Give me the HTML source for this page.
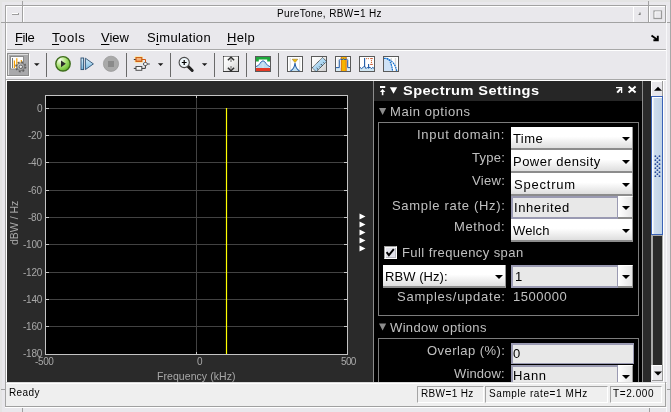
<!DOCTYPE html>
<html><head><meta charset="utf-8">
<style>
*{margin:0;padding:0;box-sizing:border-box}
html,body{width:671px;height:412px;overflow:hidden;background:#e9e8ec;font-family:"Liberation Sans",sans-serif;position:relative}
.a{position:absolute}
.t{position:absolute;white-space:nowrap;line-height:1;will-change:transform}
.u{text-decoration:underline;text-underline-offset:2px;text-decoration-thickness:1px}
</style></head><body>
<div class="a" style="left:0px;top:0px;width:671px;height:2px;background:#e4e4e4"></div>
<div class="a" style="left:5px;top:5px;width:661px;height:1px;background:#a2a2a2"></div>
<div class="a" style="left:6px;top:6px;width:659px;height:1px;background:#fff"></div>
<div class="a" style="left:665px;top:5px;width:1px;height:18px;background:#a2a2a2"></div>
<div class="a" style="left:0px;top:2px;width:2px;height:410px;background:#e4e4e4"></div>
<div class="a" style="left:5px;top:5px;width:1px;height:401px;background:#a4a4a4"></div>
<div class="a" style="left:6px;top:6px;width:1px;height:376px;background:#fff"></div>
<div class="a" style="left:23px;top:6px;width:1px;height:16px;background:#fff"></div>
<div class="a" style="left:22px;top:1px;width:1px;height:22px;background:#a2a2a2"></div>
<div class="a" style="left:648px;top:1px;width:1px;height:22px;background:#a2a2a2"></div>
<div class="a" style="left:633px;top:6px;width:1px;height:16px;background:#fff"></div>
<div class="a" style="left:649px;top:6px;width:1px;height:16px;background:#fff"></div>
<div class="a" style="left:1px;top:22px;width:665px;height:1px;background:#a2a2a2"></div>
<div class="a" style="left:12px;top:13px;width:7px;height:2px;border-bottom:1px solid #9c9c9c;border-right:1px solid #9c9c9c;background:#fff"></div>
<svg class="a" style="left:0;top:0" width="671" height="50"><path d="M640 12.5 V14.5 H638.6" fill="none" stroke="#777" stroke-width="1.2"/><rect x="654" y="11" width="7.5" height="7.5" fill="none" stroke="#9a9a9a" stroke-width="1.2"/><path d="M655 17.5 V11.8 H660.8" fill="none" stroke="#fff" stroke-width="0.8"/><path d="M651.5 35.6 L657 39.6 M657.8 35.8 V40.2 H653.4" fill="none" stroke="#000" stroke-width="1.9"/></svg>
<div class="t" style="left:276.80px;top:9px;font-size:10px;letter-spacing:0.382px;color:#000;">PureTone, RBW=1 Hz</div>
<div class="t" style="left:15.20px;top:31px;font-size:13px;letter-spacing:-0.400px;color:#000;"><span class="u">F</span>ile</div>
<div class="t" style="left:52.00px;top:31px;font-size:13px;letter-spacing:0.587px;color:#000;"><span class="u">T</span>ools</div>
<div class="t" style="left:101.00px;top:31px;font-size:13px;letter-spacing:0.000px;color:#000;"><span class="u">V</span>iew</div>
<div class="t" style="left:146.70px;top:31px;font-size:13px;letter-spacing:0.328px;color:#000;">S<span class="u">i</span>mulation</div>
<div class="t" style="left:227.00px;top:31px;font-size:13px;letter-spacing:0.350px;color:#000;"><span class="u">H</span>elp</div>
<svg class="a" style="left:0;top:0" width="671" height="82" viewBox="0 0 671 82" shape-rendering="geometricPrecision">
<defs>
<radialGradient id="gPlay" cx="0.3" cy="0.25" r="0.85"><stop offset="0" stop-color="#fafff4"/><stop offset="0.45" stop-color="#b0e47c"/><stop offset="1" stop-color="#5cb422"/></radialGradient>
<linearGradient id="gBlue" x1="0" y1="0" x2="0" y2="1"><stop offset="0" stop-color="#d8eefa"/><stop offset="1" stop-color="#78b8e0"/></linearGradient>
<linearGradient id="gBox" x1="0" y1="0" x2="1" y2="0"><stop offset="0" stop-color="#ffffff"/><stop offset="1" stop-color="#d4d4d4"/></linearGradient>
<linearGradient id="gOr" x1="0" y1="0" x2="0" y2="1"><stop offset="0" stop-color="#fad0a0"/><stop offset="1" stop-color="#ec9450"/></linearGradient>
<linearGradient id="gBox2" x1="0" y1="0" x2="1" y2="1"><stop offset="0" stop-color="#ffffff"/><stop offset="0.4" stop-color="#f4f4f4"/><stop offset="1" stop-color="#cccccc"/></linearGradient>
<linearGradient id="gRul" x1="0" y1="0" x2="1" y2="1"><stop offset="0" stop-color="#d4ecfa"/><stop offset="1" stop-color="#86c0e6"/></linearGradient>
<linearGradient id="gGear" x1="0" y1="0" x2="1" y2="1"><stop offset="0" stop-color="#d8d8d8"/><stop offset="1" stop-color="#888888"/></linearGradient>
</defs>
<!-- menu separator -->
<rect x="7" y="49" width="659" height="1" fill="#a8a8a8"/>
<rect x="7" y="50" width="659" height="1" fill="#ffffff"/>
<!-- toolbar bottom -->
<rect x="6" y="79" width="660" height="1" fill="#a8a8a8"/>
<rect x="6" y="80" width="660" height="1" fill="#ffffff"/>
<!-- pressed button -->
<rect x="7.5" y="53.5" width="21" height="22" fill="#a9a9ab" stroke="#8c8c8c"/>
<path d="M8.5 75 V54.5 H28" fill="none" stroke="#dedede"/>
<path d="M29.5 54 V76.5 H7" fill="none" stroke="#ffffff"/>
<!-- icon: scope w/ gear -->
<rect x="10.5" y="56.5" width="13" height="12.5" fill="#fdfdfd" stroke="#8a8a8a"/>
<path d="M12.5 58 V68" stroke="#6a6a6a" stroke-width="0.9"/>
<path d="M14.4 68 V60.5 M16.8 68 V58.2 M19 68 V62.5 M21.3 68 V60" stroke="#f5a000" stroke-width="1.2"/>
<g transform="translate(20.8,66.8)">
<circle r="4.5" fill="none" stroke="#5e5e5e" stroke-width="2.2" stroke-dasharray="1.7 1.83"/>
<circle r="3.9" fill="url(#gGear)" stroke="#6a6a6a" stroke-width="0.7"/>
<circle r="1.7" fill="#ececec" stroke="#4a4a4a" stroke-width="0.8"/>
</g>
<!-- dropdown arrows -->
<path d="M34 63.2 H39.6 L36.8 66Z" fill="#1a1a1a"/>
<path d="M157.9 63.2 H163.3 L160.6 66Z" fill="#1a1a1a"/>
<path d="M201.9 63.2 H207.3 L204.6 66Z" fill="#1a1a1a"/>
<!-- separators -->
<rect x="46" y="53" width="1" height="24" fill="#6a6a6a"/>
<rect x="126" y="53" width="1" height="24" fill="#6a6a6a"/>
<rect x="170" y="53" width="1" height="24" fill="#6a6a6a"/>
<rect x="214" y="53" width="1" height="24" fill="#6a6a6a"/>
<rect x="246" y="53" width="1" height="24" fill="#6a6a6a"/>
<rect x="278" y="53" width="1" height="24" fill="#6a6a6a"/>
<!-- play -->
<circle cx="63" cy="63.8" r="7.2" fill="url(#gPlay)" stroke="#3e6c1c" stroke-width="1.4"/>
<path d="M61 60.5 L65.8 63.8 L61 67.2Z" fill="#2a2a2a"/>
<!-- step -->
<rect x="81" y="58" width="2.6" height="11.6" fill="url(#gBlue)" stroke="#2a4e70" stroke-width="0.9"/>
<path d="M85.4 58.2 L93.4 63.9 L85.4 69.6Z" fill="url(#gBlue)" stroke="#2a4e70" stroke-width="0.9" stroke-linejoin="round"/>
<!-- stop -->
<circle cx="111" cy="63.8" r="7.6" fill="#a9a9a9" stroke="#9a9a9a" stroke-width="0.8"/>
<rect x="108" y="61" width="6" height="6" fill="#8a8a8a"/>
<!-- hierarchy -->
<rect x="134.6" y="56.2" width="8.4" height="6.6" rx="1" fill="#fde6a0"/>
<path d="M133.8 59.5 H136" stroke="#3a3a3a" stroke-width="1"/>
<rect x="136" y="57.6" width="5.8" height="3.8" fill="url(#gOr)" stroke="#cc5a14" stroke-width="1.1"/>
<path d="M141.8 59.5 H145.5 V62.6" fill="none" stroke="#cc5a14" stroke-width="1"/>
<ellipse cx="145.4" cy="64" rx="2.1" ry="1.5" fill="#fbfbfb" stroke="#4e4e4e" stroke-width="0.9"/>
<path d="M147.6 64 H149.8" stroke="#3a3a3a" stroke-width="0.9"/>
<rect x="136" y="66.5" width="5.8" height="3.8" fill="#f6f6f6" stroke="#4e4e4e" stroke-width="1"/>
<path d="M133.8 68.4 H136 M141.8 68.4 H145.4 V65.5" fill="none" stroke="#3a3a3a" stroke-width="1"/>
<!-- zoom -->
<path d="M187.8 66.1 L192.2 70.5" stroke="#222" stroke-width="3" stroke-linecap="round"/>
<circle cx="184.2" cy="62.5" r="5.1" fill="#eef6fa" stroke="#4a4a4a" stroke-width="1.1"/>
<path d="M181.8 62.5 H186.6 M184.2 60.1 V64.9" stroke="#000" stroke-width="1.2"/>
<!-- autoscale -->
<rect x="223.5" y="56.5" width="15" height="15" fill="url(#gBox2)" stroke="#3a3a3a"/>
<path d="M224 71 V57 H238" fill="none" stroke="#fff" stroke-width="0.8"/>
<rect x="230.3" y="59.2" width="1.4" height="2.8" fill="#8c8c8c"/>
<rect x="230.3" y="66" width="1.4" height="2.8" fill="#8c8c8c"/>
<path d="M227.9 60.2 L231 57.3 L234.1 60.2" fill="none" stroke="#2c2c2c" stroke-width="1.5"/>
<path d="M227.9 67.8 L231 70.7 L234.1 67.8" fill="none" stroke="#2c2c2c" stroke-width="1.5"/>
<!-- spectrum icon -->
<rect x="255.5" y="56.5" width="15" height="15" fill="#fff" stroke="#5a5a5a"/>
<path d="M256 57 H270 V61.6 H267.2 V59.6 H258.8 V61.6 H256Z" fill="#1ea83c"/>
<path d="M256.5 67 C259.5 66.5 260.5 61 263 61 C265.5 61 266.5 66.5 269.5 67 V68 H256.5Z" fill="#bcdcf0"/>
<rect x="262.7" y="61.5" width="0.6" height="6.5" fill="#e8f4fa"/>
<path d="M256 66.6 C259.5 66.3 260.5 60.8 263 60.8 C265.5 60.8 266.5 66.3 270 66.6" fill="none" stroke="#2a62b0" stroke-width="1"/>
<rect x="256" y="68" width="14" height="3" fill="#e53a26"/>
<!-- peak finder -->
<rect x="287.5" y="56.5" width="15" height="15" fill="#fff" stroke="#5a5a5a"/>
<rect x="289.6" y="58" width="1.4" height="13" fill="#e2e2e2"/>
<rect x="299" y="58" width="1.4" height="13" fill="#e2e2e2"/>
<path d="M290.5 71 C293.8 69.2 294.6 66.5 295 63 C295.4 66.5 296.2 69.2 299.5 71Z" fill="#c4e2f2"/>
<path d="M290.5 71 C293.8 69.2 294.6 66.5 295 63 C295.4 66.5 296.2 69.2 299.5 71" fill="none" stroke="#2860a8" stroke-width="1.1"/>
<path d="M292.2 59.2 H297.8 L295 62.6Z" fill="#f0c000" stroke="#a07830" stroke-width="0.6"/>
<!-- ruler -->
<rect x="311.5" y="56.5" width="15" height="15" fill="url(#gBox2)" stroke="#5a5a5a"/>
<path d="M312.2 67.8 L322.6 57.4 L326.6 61.4 L316.2 71.8Z" fill="url(#gRul)" stroke="#2e2e2e" stroke-width="0.9" stroke-dasharray="1.1 0.6"/>
<path d="M318.3 69.7 l-1.6 -1.6 M320.4 67.6 l-1 -1 M322.4 65.6 l-1.6 -1.6 M324.5 63.5 l-1 -1" stroke="#2e2e2e" stroke-width="0.9"/>
<!-- channel measurements -->
<rect x="335.5" y="56.5" width="15" height="15" fill="#fff" stroke="#5a5a5a"/>
<rect x="337.6" y="58" width="1.2" height="13" fill="#e6e6e6"/>
<rect x="347.4" y="58" width="1.2" height="13" fill="#e6e6e6"/>
<rect x="336" y="67.8" width="14" height="3.2" fill="#d6eaf4"/>
<rect x="341" y="57" width="5.4" height="14" fill="#f6b400"/>
<rect x="340.8" y="57" width="0.9" height="14" fill="#d86a1c"/>
<rect x="345.7" y="57" width="0.9" height="14" fill="#d86a1c"/>
<path d="M336 67.6 H339.3 V60.2 L340.6 58.9 L342 59.8 L343.5 58.7 L345 59.8 L346.4 58.9 L347.7 60.2 V67.6 H350" fill="none" stroke="#1f5aa8" stroke-width="1"/>
<!-- distortion -->
<rect x="359.5" y="56.5" width="15" height="15" fill="#fff" stroke="#5a5a5a"/>
<path d="M360 67.4 L361.6 68.6 L363.2 67.2 L364.6 66.2 L366 68.6 L367.2 67.4 L368.6 68.2 L370 67.2 L371.4 68.6 L372.8 67.4 L374 68.4 V71 H360Z" fill="#d0e6f2"/>
<path d="M360 67.4 L361.6 68.6 L363.2 67.2 L364.6 66.2 L366 68.6 L367.2 67.4 L368.6 68.2 L370 67.2 L371.4 68.6 L372.8 67.4 L374 68.4" fill="none" stroke="#1f5aa8" stroke-width="1"/>
<path d="M364.6 67 V58 M368.6 68 V64" stroke="#1f5aa8" stroke-width="1.1"/>
<circle cx="366.6" cy="58.6" r="0.6" fill="#d2602a"/><circle cx="368.4" cy="58.6" r="0.6" fill="#d2602a"/>
<circle cx="371.5" cy="60.6" r="0.6" fill="#d2602a"/><circle cx="371.5" cy="62.4" r="0.6" fill="#d2602a"/>
<path d="M370.2 58.6 h2.6 M370.2 64.4 h2.6" stroke="#c8502a" stroke-width="1"/>
<!-- ccdf -->
<rect x="383.5" y="56.5" width="15" height="15" fill="#fff" stroke="#5a5a5a"/>
<rect x="386.2" y="58" width="1.4" height="13" fill="#dadada"/>
<rect x="390.6" y="58" width="1.4" height="13" fill="#dadada"/>
<rect x="394.8" y="58" width="1.4" height="13" fill="#dadada"/>
<path d="M384 58.4 H386.4 C389.5 59.2 391.5 63 392.6 71 H384Z" fill="#cfe2f6"/>
<path d="M384 58.4 H386.4 C389.5 59.2 391.5 63 392.6 71" fill="none" stroke="#1270d0" stroke-width="1.2" stroke-dasharray="1.8 0.7"/>
<path d="M386.8 58.6 C391 59.8 395.2 63.5 396.8 71" fill="none" stroke="#1270d0" stroke-width="1.2" stroke-dasharray="1.8 0.7"/>
</svg>
<svg class="a" style="left:0;top:0" width="671" height="412" viewBox="0 0 671 412">
<rect x="7" y="81" width="366" height="301" fill="#2a2a2a"/>
<rect x="45" y="95" width="303" height="260" fill="#000"/>
<rect x="46" y="108" width="301" height="1" fill="#424242"/>
<rect x="46" y="135" width="301" height="1" fill="#424242"/>
<rect x="46" y="162" width="301" height="1" fill="#424242"/>
<rect x="46" y="190" width="301" height="1" fill="#424242"/>
<rect x="46" y="217" width="301" height="1" fill="#424242"/>
<rect x="46" y="244" width="301" height="1" fill="#424242"/>
<rect x="46" y="272" width="301" height="1" fill="#424242"/>
<rect x="46" y="299" width="301" height="1" fill="#424242"/>
<rect x="46" y="326" width="301" height="1" fill="#424242"/>
<rect x="196" y="96" width="1" height="258" fill="#424242"/>
<rect x="46" y="108" width="3" height="1" fill="#c4c4c4"/>
<rect x="344" y="108" width="3" height="1" fill="#c4c4c4"/>
<rect x="46" y="135" width="3" height="1" fill="#c4c4c4"/>
<rect x="344" y="135" width="3" height="1" fill="#c4c4c4"/>
<rect x="46" y="162" width="3" height="1" fill="#c4c4c4"/>
<rect x="344" y="162" width="3" height="1" fill="#c4c4c4"/>
<rect x="46" y="190" width="3" height="1" fill="#c4c4c4"/>
<rect x="344" y="190" width="3" height="1" fill="#c4c4c4"/>
<rect x="46" y="217" width="3" height="1" fill="#c4c4c4"/>
<rect x="344" y="217" width="3" height="1" fill="#c4c4c4"/>
<rect x="46" y="244" width="3" height="1" fill="#c4c4c4"/>
<rect x="344" y="244" width="3" height="1" fill="#c4c4c4"/>
<rect x="46" y="272" width="3" height="1" fill="#c4c4c4"/>
<rect x="344" y="272" width="3" height="1" fill="#c4c4c4"/>
<rect x="46" y="299" width="3" height="1" fill="#c4c4c4"/>
<rect x="344" y="299" width="3" height="1" fill="#c4c4c4"/>
<rect x="46" y="326" width="3" height="1" fill="#c4c4c4"/>
<rect x="344" y="326" width="3" height="1" fill="#c4c4c4"/>
<rect x="196" y="96" width="1" height="2" fill="#c4c4c4"/>
<rect x="196" y="352" width="1" height="2" fill="#c4c4c4"/>
<rect x="45.5" y="95.5" width="302" height="259" fill="none" stroke="#c4c4c4"/>
<rect x="225.9" y="108" width="1.2" height="246" fill="#ffff00"/>
<path d="M359.5 213.5 L365.5 216.5 L359.5 219.5Z" fill="#fff"/>
<path d="M359.5 221.5 L365.5 224.5 L359.5 227.5Z" fill="#fff"/>
<path d="M359.5 229.5 L365.5 232.5 L359.5 235.5Z" fill="#fff"/>
<path d="M359.5 237.5 L365.5 240.5 L359.5 243.5Z" fill="#fff"/>
<path d="M359.5 245.5 L365.5 248.5 L359.5 251.5Z" fill="#fff"/>
</svg>
<div class="t" style="left:36.89px;top:104px;font-size:10px;letter-spacing:0.000px;color:#a8a8a8;">0</div>
<div class="t" style="left:28.21px;top:131px;font-size:10px;letter-spacing:-0.254px;color:#a8a8a8;">-20</div>
<div class="t" style="left:28.21px;top:158px;font-size:10px;letter-spacing:-0.254px;color:#a8a8a8;">-40</div>
<div class="t" style="left:28.21px;top:186px;font-size:10px;letter-spacing:-0.254px;color:#a8a8a8;">-60</div>
<div class="t" style="left:28.21px;top:213px;font-size:10px;letter-spacing:-0.254px;color:#a8a8a8;">-80</div>
<div class="t" style="left:22.90px;top:240px;font-size:10px;letter-spacing:-0.233px;color:#a8a8a8;">-100</div>
<div class="t" style="left:22.90px;top:268px;font-size:10px;letter-spacing:-0.233px;color:#a8a8a8;">-120</div>
<div class="t" style="left:22.90px;top:295px;font-size:10px;letter-spacing:-0.233px;color:#a8a8a8;">-140</div>
<div class="t" style="left:22.90px;top:322px;font-size:10px;letter-spacing:-0.233px;color:#a8a8a8;">-160</div>
<div class="t" style="left:22.90px;top:349px;font-size:10px;letter-spacing:-0.233px;color:#a8a8a8;">-180</div>
<div class="t" style="left:35.10px;top:357px;font-size:10px;letter-spacing:-0.367px;color:#a8a8a8;">-500</div>
<div class="t" style="left:197.20px;top:357px;font-size:10px;letter-spacing:0.000px;color:#a8a8a8;">0</div>
<div class="t" style="left:340.50px;top:357px;font-size:10px;letter-spacing:-0.625px;color:#a8a8a8;">500</div>
<div class="t" style="left:156.70px;top:371px;font-size:10.5px;letter-spacing:0.064px;color:#a8a8a8;">Frequency (kHz)</div>
<div class="t" style="left:9px;top:245px;font-size:10.5px;color:#a8a8a8;transform:rotate(-90deg);transform-origin:0 0">dBW / Hz</div>
<div class="a" style="left:373px;top:81px;width:1px;height:301px;background:#8c8c8c"></div>
<div class="a" style="left:374px;top:81px;width:268px;height:20px;background:#262626"></div>
<div class="a" style="left:374px;top:101px;width:268px;height:281px;background:#000"></div>
<div class="a" style="left:642px;top:81px;width:1px;height:301px;background:#8c8c8c"></div>
<div class="a" style="left:643px;top:81px;width:8px;height:301px;background:#2a2a2a"></div>
<svg class="a" style="left:0;top:0" width="671" height="412" viewBox="0 0 671 412">
<rect x="380" y="86" width="5.2" height="2" fill="#fff"/>
<path d="M379.9 92 L382.6 89 L385.3 92Z" fill="#fff"/>
<rect x="381.8" y="91" width="1.6" height="4.2" fill="#fff"/>
<path d="M389.8 87.2 H397.2 L393.5 93.8Z" fill="#fff"/>
<path d="M616 87.6 H621.6 V93" fill="none" stroke="#fff" stroke-width="1.3"/>
<path d="M620.8 88.6 L617.2 92.6" stroke="#fff" stroke-width="2.1"/>
<path d="M628.6 86.6 L635.6 92.6 M635.6 86.6 L628.6 92.6" stroke="#fff" stroke-width="2"/>
<path d="M379 108 H386.2 L382.6 115Z" fill="#8c8c8c"/>
<path d="M379 323.4 H386.2 L382.6 330.4Z" fill="#8c8c8c"/>
</svg>
<div class="t" style="left:402.50px;top:84px;font-size:13px;letter-spacing:0.397px;color:#fff;font-weight:bold;transform:scaleX(1.1223);transform-origin:0 0;">Spectrum Settings</div>
<div class="t" style="left:390.40px;top:105px;font-size:13px;letter-spacing:0.577px;color:#c0c0c0;">Main options</div>
<div class="t" style="left:390.40px;top:321px;font-size:13px;letter-spacing:0.358px;color:#c0c0c0;">Window options</div>
<div class="a" style="left:378px;top:122px;width:261px;height:194px;border:1px solid #7c7c7c"></div>
<div class="a" style="left:378px;top:338px;width:261px;height:60px;border:1px solid #7c7c7c"></div>
<div class="t" style="left:417.20px;top:128px;font-size:13px;letter-spacing:0.713px;color:#c0c0c0;">Input domain:</div>
<div class="t" style="left:471.80px;top:151px;font-size:13px;letter-spacing:0.237px;color:#c0c0c0;">Type:</div>
<div class="t" style="left:471.60px;top:174px;font-size:13px;letter-spacing:0.350px;color:#c0c0c0;">View:</div>
<div class="t" style="left:391.80px;top:199px;font-size:13px;letter-spacing:0.684px;color:#c0c0c0;">Sample rate (Hz):</div>
<div class="t" style="left:453.80px;top:220px;font-size:13px;letter-spacing:0.617px;color:#c0c0c0;">Method:</div>
<div class="t" style="left:396.60px;top:290px;font-size:13px;letter-spacing:0.743px;color:#c0c0c0;">Samples/update:</div>
<div class="t" style="left:426.60px;top:344px;font-size:13px;letter-spacing:0.445px;color:#c0c0c0;">Overlap (%):</div>
<div class="t" style="left:454.00px;top:367px;font-size:13px;letter-spacing:0.125px;color:#c0c0c0;">Window:</div>
<div class="t" style="left:513.30px;top:290px;font-size:13px;letter-spacing:0.533px;color:#c0c0c0;">1500000</div>
<div class="t" style="left:402.00px;top:246px;font-size:13px;letter-spacing:0.428px;color:#c0c0c0;">Full frequency span</div>
<div class="a" style="left:511px;top:127px;width:122px;height:23px;background:linear-gradient(#fff 0%,#fff 45%,#dedede 100%);border-bottom:2px solid #8c8c8c;border-right:1px solid #9a9a9a"></div><svg class="a" style="left:622px;top:137px" width="9" height="5"><path d="M0 0 H8 L4 4Z" fill="#000"/></svg>
<div class="t" style="left:513.00px;top:132px;font-size:13px;letter-spacing:0.400px;color:#000;">Time</div>
<div class="a" style="left:511px;top:150px;width:122px;height:23px;background:linear-gradient(#fff 0%,#fff 45%,#dedede 100%);border-bottom:2px solid #8c8c8c;border-right:1px solid #9a9a9a"></div><svg class="a" style="left:622px;top:160px" width="9" height="5"><path d="M0 0 H8 L4 4Z" fill="#000"/></svg>
<div class="t" style="left:513.00px;top:155px;font-size:13px;letter-spacing:0.471px;color:#000;">Power density</div>
<div class="a" style="left:511px;top:173px;width:122px;height:23px;background:linear-gradient(#fff 0%,#fff 45%,#dedede 100%);border-bottom:2px solid #8c8c8c;border-right:1px solid #9a9a9a"></div><svg class="a" style="left:622px;top:183px" width="9" height="5"><path d="M0 0 H8 L4 4Z" fill="#000"/></svg>
<div class="t" style="left:513.80px;top:178px;font-size:13px;letter-spacing:0.779px;color:#000;">Spectrum</div>
<div class="a" style="left:511px;top:196px;width:107px;height:23px;background:#e8e8e8;border:2px solid #9a9ab2;border-right-width:1px"></div><div class="a" style="left:618px;top:196px;width:15px;height:23px;background:linear-gradient(90deg,#fff,#e6e6e6);border-bottom:2px solid #8c8c8c;border-right:1px solid #9a9a9a;border-top:1px solid #fff"></div><svg class="a" style="left:622px;top:206px" width="9" height="5"><path d="M0 0 H8 L4 4Z" fill="#000"/></svg>
<div class="t" style="left:513.50px;top:201px;font-size:13px;letter-spacing:0.588px;color:#000;">Inherited</div>
<div class="a" style="left:511px;top:219px;width:122px;height:23px;background:linear-gradient(#fff 0%,#fff 45%,#dedede 100%);border-bottom:2px solid #8c8c8c;border-right:1px solid #9a9a9a"></div><svg class="a" style="left:622px;top:229px" width="9" height="5"><path d="M0 0 H8 L4 4Z" fill="#000"/></svg>
<div class="t" style="left:513.00px;top:224px;font-size:13px;letter-spacing:0.125px;color:#000;">Welch</div>
<div class="a" style="left:383px;top:265px;width:123px;height:23px;background:linear-gradient(#fff 0%,#fff 45%,#dedede 100%);border-bottom:2px solid #8c8c8c;border-right:1px solid #9a9a9a"></div><svg class="a" style="left:495px;top:275px" width="9" height="5"><path d="M0 0 H8 L4 4Z" fill="#000"/></svg>
<div class="t" style="left:385.40px;top:270px;font-size:13px;letter-spacing:0.050px;color:#000;">RBW (Hz):</div>
<div class="a" style="left:511px;top:265px;width:107px;height:23px;background:#e8e8e8;border:2px solid #9a9ab2;border-right-width:1px"></div><div class="a" style="left:618px;top:265px;width:15px;height:23px;background:linear-gradient(90deg,#fff,#e6e6e6);border-bottom:2px solid #8c8c8c;border-right:1px solid #9a9a9a;border-top:1px solid #fff"></div><svg class="a" style="left:622px;top:275px" width="9" height="5"><path d="M0 0 H8 L4 4Z" fill="#000"/></svg>
<div class="t" style="left:514.80px;top:270px;font-size:13px;letter-spacing:0.000px;color:#000;">1</div>
<div class="a" style="left:511px;top:343px;width:123px;height:21px;background:#e8e8e8;border:2px solid #9a9ab2;border-right-width:1px;border-bottom-width:1px"></div>
<div class="t" style="left:513.00px;top:347px;font-size:13px;letter-spacing:0.000px;color:#000;">0</div>
<div class="a" style="left:511px;top:365px;width:107px;height:23px;background:#e8e8e8;border:2px solid #9a9ab2;border-right-width:1px"></div><div class="a" style="left:618px;top:365px;width:15px;height:23px;background:linear-gradient(90deg,#fff,#e6e6e6);border-bottom:2px solid #8c8c8c;border-right:1px solid #9a9a9a;border-top:1px solid #fff"></div><svg class="a" style="left:622px;top:375px" width="9" height="5"><path d="M0 0 H8 L4 4Z" fill="#000"/></svg>
<div class="t" style="left:513.40px;top:369px;font-size:13px;letter-spacing:0.667px;color:#000;">Hann</div>
<div class="a" style="left:384px;top:246px;width:13px;height:13px;background:#e2e2ea;border:1px solid;border-color:#a0a0a0 #fff #fff #a0a0a0;box-shadow:inset 1px 1px 0 #f8f8f8,inset -1px -1px 0 #b8b8c0"></div>
<svg class="a" style="left:0;top:0" width="671" height="412"><path d="M386.6 252.2 L388.9 255.2 L393.8 249.2" fill="none" stroke="#000" stroke-width="1.9"/></svg>
<svg class="a" style="left:0;top:0" width="671" height="412" viewBox="0 0 671 412">
<rect x="651" y="81" width="12" height="15" fill="#e8e7eb"/>
<rect x="651" y="81" width="1" height="15" fill="#fff"/><rect x="651" y="81" width="12" height="1" fill="#fff"/>
<rect x="662" y="81" width="1" height="15" fill="#9a9a9a"/>
<path d="M654 90.8 H662 L658 86.8Z" fill="#000"/>
<defs><linearGradient id="gTh" x1="0" y1="0" x2="1" y2="0"><stop offset="0" stop-color="#d2e0f0"/><stop offset="1" stop-color="#c0d2e6"/></linearGradient></defs>
<rect x="651.5" y="96.5" width="11" height="138" fill="url(#gTh)" stroke="#3a62b6"/>
<rect x="652" y="97" width="1.5" height="137" fill="#fff"/><rect x="652" y="97" width="10" height="1" fill="#fff"/>
<circle cx="655.4" cy="156.2" r="0.9" fill="#2a4a9a"/>
<circle cx="659.5" cy="156.2" r="0.9" fill="#2a4a9a"/>
<circle cx="655.4" cy="160.2" r="0.9" fill="#2a4a9a"/>
<circle cx="659.5" cy="160.2" r="0.9" fill="#2a4a9a"/>
<circle cx="655.4" cy="164.2" r="0.9" fill="#2a4a9a"/>
<circle cx="659.5" cy="164.2" r="0.9" fill="#2a4a9a"/>
<circle cx="655.4" cy="168.2" r="0.9" fill="#2a4a9a"/>
<circle cx="659.5" cy="168.2" r="0.9" fill="#2a4a9a"/>
<circle cx="655.4" cy="172.2" r="0.9" fill="#2a4a9a"/>
<circle cx="659.5" cy="172.2" r="0.9" fill="#2a4a9a"/>
<circle cx="655.4" cy="176.2" r="0.9" fill="#2a4a9a"/>
<circle cx="659.5" cy="176.2" r="0.9" fill="#2a4a9a"/>
<circle cx="657.4" cy="158.2" r="0.9" fill="#2a4a9a"/>
<circle cx="657.4" cy="162.2" r="0.9" fill="#2a4a9a"/>
<circle cx="657.4" cy="166.2" r="0.9" fill="#2a4a9a"/>
<circle cx="657.4" cy="170.2" r="0.9" fill="#2a4a9a"/>
<circle cx="657.4" cy="174.2" r="0.9" fill="#2a4a9a"/>
<rect x="651" y="235" width="12" height="130" fill="#a8a8a8"/>
<rect x="653" y="236" width="9" height="129" fill="#2a2a2a"/>
<rect x="652" y="365" width="11" height="16" fill="#e8e7eb"/>
<rect x="652" y="365" width="1" height="16" fill="#fff"/><rect x="652" y="365" width="11" height="1" fill="#fff"/>
<rect x="662" y="365" width="1" height="16" fill="#9a9a9a"/><rect x="652" y="380" width="11" height="1" fill="#9a9a9a"/>
<path d="M654 371.5 H662 L658 375.5Z" fill="#000"/>
</svg>
<div class="a" style="left:663px;top:81px;width:1px;height:301px;background:#fff"></div>
<div class="a" style="left:666px;top:6px;width:1px;height:406px;background:#f8f8fa"></div>
<div class="a" style="left:670px;top:0px;width:1px;height:412px;background:#a8a8a8"></div>
<div class="a" style="left:667px;top:22px;width:4px;height:1px;background:#a2a2a2"></div>
<div class="a" style="left:6px;top:382px;width:661px;height:25px;background:#efefef;border-top:1px solid #dadada;box-shadow:inset 0 1px 0 #fff"></div>
<div class="a" style="left:417px;top:386px;width:67px;height:17px;border:1px solid;border-color:#a4a4a4 #fff #fff #a4a4a4"></div>
<div class="a" style="left:485px;top:386px;width:123px;height:17px;border:1px solid;border-color:#a4a4a4 #fff #fff #a4a4a4"></div>
<div class="a" style="left:610px;top:386px;width:52px;height:17px;border:1px solid;border-color:#a4a4a4 #fff #fff #a4a4a4"></div>
<div class="t" style="left:8.50px;top:388px;font-size:10px;letter-spacing:0.375px;color:#000;">Ready</div>
<div class="t" style="left:420.70px;top:389px;font-size:10px;letter-spacing:0.364px;color:#000;">RBW=1 Hz</div>
<div class="t" style="left:488.50px;top:389px;font-size:10px;letter-spacing:0.603px;color:#000;">Sample rate=1 MHz</div>
<div class="t" style="left:612.70px;top:389px;font-size:10px;letter-spacing:0.600px;color:#000;">T=2.000</div>
<div class="a" style="left:5px;top:406px;width:661px;height:1px;background:#a0a0a0"></div>
<div class="a" style="left:665px;top:382px;width:1px;height:25px;background:#a2a2a2"></div>
<div class="a" style="left:5px;top:407px;width:662px;height:1px;background:#fff"></div>
<div class="a" style="left:22px;top:408px;width:1px;height:4px;background:#a0a0a0"></div>
<div class="a" style="left:649px;top:408px;width:1px;height:4px;background:#a0a0a0"></div>
<div class="a" style="left:1px;top:389px;width:4px;height:1px;background:#a0a0a0"></div>
<div class="a" style="left:667px;top:389px;width:4px;height:1px;background:#a0a0a0"></div>
</body></html>
